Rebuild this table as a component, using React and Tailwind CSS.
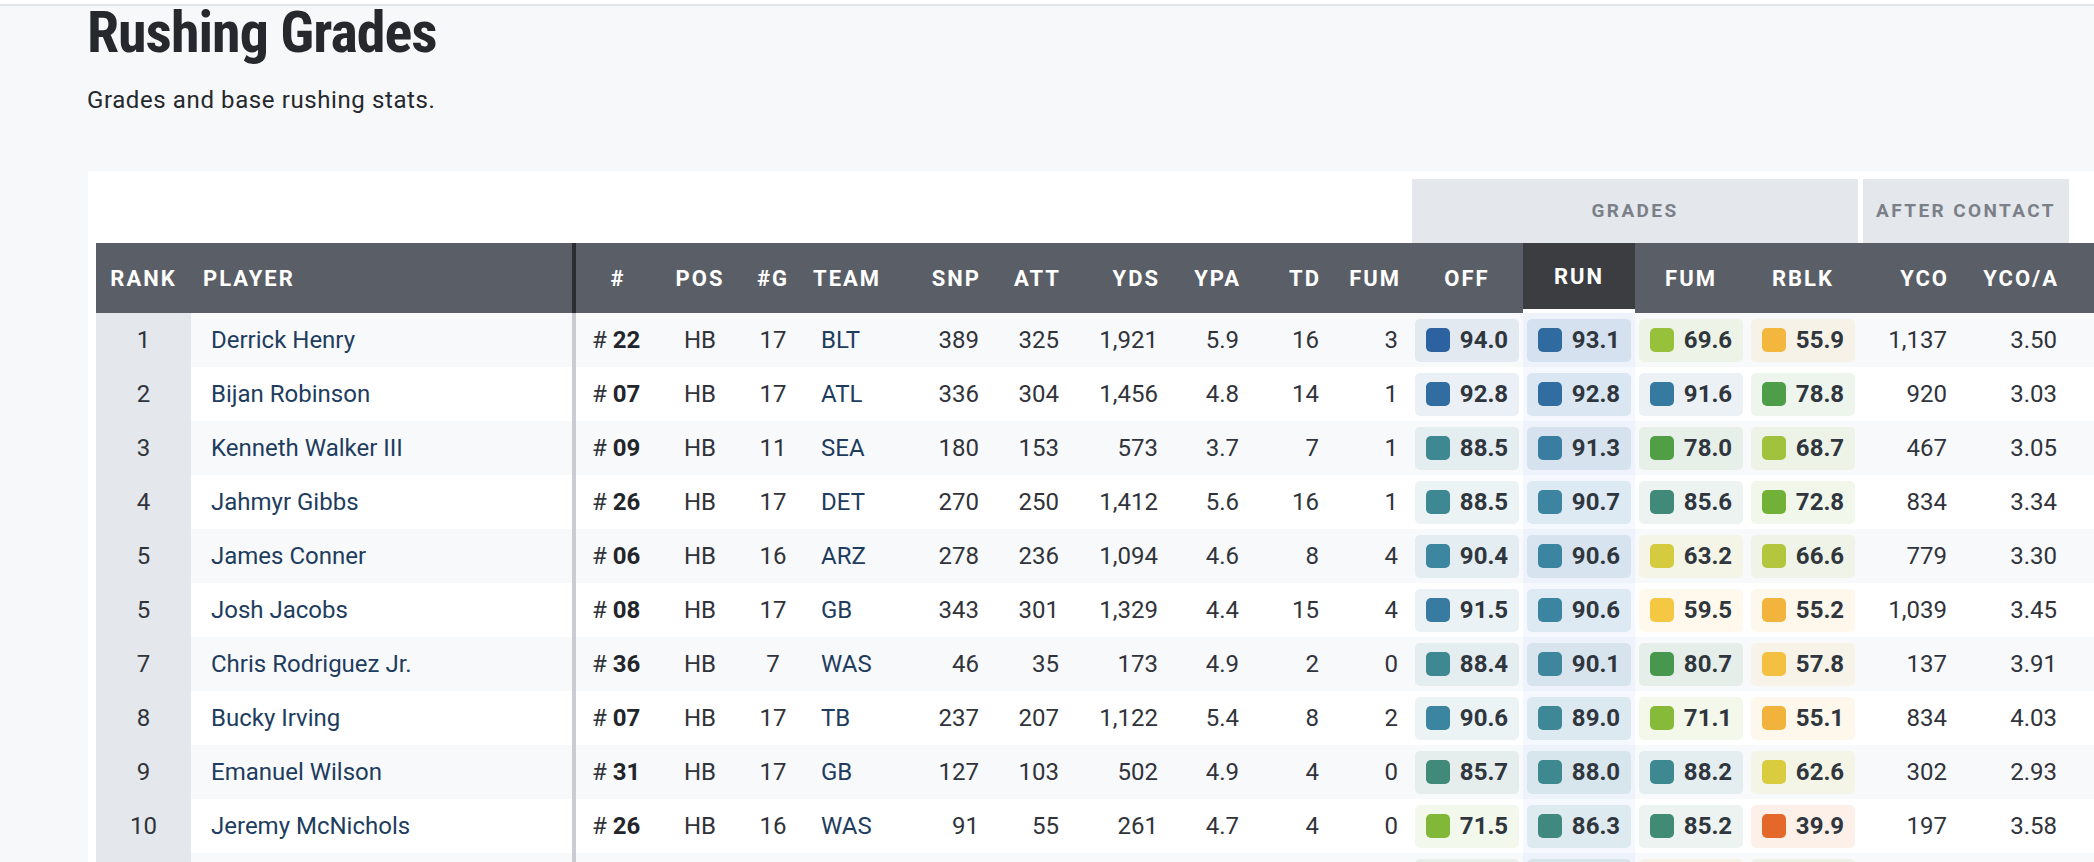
import React from "react";

const COLS =
  "grid grid-cols-[95px_381px_4px_84px_80px_66px_94px_91px_80px_99px_81px_80px_80px_112px_112px_112px_112px_100px_110px_1fr]";

const STOPS = [
  [0, "#d9432a"],
  [40, "#e4682a"],
  [55, "#f2b33c"],
  [60, "#f5ca45"],
  [63, "#d6cc3e"],
  [67, "#b0c43e"],
  [70, "#94c13a"],
  [72.5, "#74b236"],
  [78, "#509f45"],
  [81, "#47964f"],
  [85.5, "#418a78"],
  [88, "#3e8890"],
  [90.5, "#3d86a0"],
  [92, "#3575a0"],
  [94, "#2c62a0"],
  [100, "#2a5a9c"],
];

function hexToRgb(h) {
  const n = parseInt(h.slice(1), 16);
  return [(n >> 16) & 255, (n >> 8) & 255, n & 255];
}

function gradeRgb(g) {
  for (let i = 0; i < STOPS.length - 1; i++) {
    const [a, ca] = STOPS[i];
    const [b, cb] = STOPS[i + 1];
    if (g >= a && g <= b) {
      const t = (g - a) / (b - a);
      const x = hexToRgb(ca);
      const y = hexToRgb(cb);
      return x.map((v, k) => Math.round(v + (y[k] - v) * t));
    }
  }
  return hexToRgb(STOPS[STOPS.length - 1][1]);
}

const ROWS = [
  ["1", "Derrick Henry", "22", "HB", "17", "BLT", "389", "325", "1,921", "5.9", "16", "3", [94.0, 93.1, 69.6, 55.9], "1,137", "3.50"],
  ["2", "Bijan Robinson", "07", "HB", "17", "ATL", "336", "304", "1,456", "4.8", "14", "1", [92.8, 92.8, 91.6, 78.8], "920", "3.03"],
  ["3", "Kenneth Walker III", "09", "HB", "11", "SEA", "180", "153", "573", "3.7", "7", "1", [88.5, 91.3, 78.0, 68.7], "467", "3.05"],
  ["4", "Jahmyr Gibbs", "26", "HB", "17", "DET", "270", "250", "1,412", "5.6", "16", "1", [88.5, 90.7, 85.6, 72.8], "834", "3.34"],
  ["5", "James Conner", "06", "HB", "16", "ARZ", "278", "236", "1,094", "4.6", "8", "4", [90.4, 90.6, 63.2, 66.6], "779", "3.30"],
  ["5", "Josh Jacobs", "08", "HB", "17", "GB", "343", "301", "1,329", "4.4", "15", "4", [91.5, 90.6, 59.5, 55.2], "1,039", "3.45"],
  ["7", "Chris Rodriguez Jr.", "36", "HB", "7", "WAS", "46", "35", "173", "4.9", "2", "0", [88.4, 90.1, 80.7, 57.8], "137", "3.91"],
  ["8", "Bucky Irving", "07", "HB", "17", "TB", "237", "207", "1,122", "5.4", "8", "2", [90.6, 89.0, 71.1, 55.1], "834", "4.03"],
  ["9", "Emanuel Wilson", "31", "HB", "17", "GB", "127", "103", "502", "4.9", "4", "0", [85.7, 88.0, 88.2, 62.6], "302", "2.93"],
  ["10", "Jeremy McNichols", "26", "HB", "16", "WAS", "91", "55", "261", "4.7", "4", "0", [71.5, 86.3, 85.2, 39.9], "197", "3.58"],
];

const PARTIAL = [76.0, 86.1, 57.0, 70.5];

function GradeBox({ value, run, empty }) {
  const [r, g, b] = gradeRgb(value);
  return (
    <div className={`flex h-full items-center justify-center ${run ? "bg-[#3b82f6]/[0.05]" : ""}`}>
      <div
        className="mx-1 flex h-[43px] w-full items-center gap-[10px] rounded-[5px] px-[11px]"
        style={{ backgroundColor: `rgba(${r},${g},${b},${run ? 0.13 : 0.1})` }}
      >
        <span
          className="h-[24px] w-[24px] shrink-0 rounded-[5px]"
          style={{ backgroundColor: `rgb(${r},${g},${b})` }}
        />
        {!empty && <span className="text-[24px] font-bold text-[#30363d]">{value.toFixed(1)}</span>}
      </div>
    </div>
  );
}

function HeaderCell({ children, align = "center", extra = "" }) {
  const a =
    align === "center" ? "justify-center" : align === "right" ? "justify-end pr-[10px]" : "justify-start";
  return (
    <div className={`flex h-full items-center ${a} ${extra}`}>
      <span className="text-[22px] font-bold uppercase tracking-[2px] text-white">{children}</span>
    </div>
  );
}

export default function App() {
  return (
    <div className="h-[862px] w-full overflow-hidden bg-[#f7f8fa] font-['Roboto',sans-serif] text-[#30343a]">
      <div className="h-[4px] bg-white" />
      <div className="h-[2px] bg-[#e2e4e7]" />
      <div className="flex h-[165px] flex-col items-start pl-[87px]">
        <h1 className="mt-[-3px] h-[58px] whitespace-nowrap font-['Roboto_Condensed','Roboto',sans-serif] text-[58px] font-bold leading-none tracking-[-1px] font-stretch-condensed text-[#25282c]">
          Rushing Grades
        </h1>
        <p className="mt-[27px] text-[24px] leading-none tracking-[0.6px] text-[#25282c]">
          Grades and base rushing stats.
        </p>
      </div>

      <div className="ml-[88px] bg-white pl-2 pt-2">
        {/* group header */}
        <div className={`${COLS} h-[64px]`}>
          <div className="col-span-4 col-start-14 mx-px flex items-center justify-center bg-[#e4e7eb]">
            <span className="text-[19px] font-bold uppercase tracking-[2.4px] text-[#7b8088]">Grades</span>
          </div>
          <div className="col-span-2 ml-1 flex items-center justify-center bg-[#e4e7eb]">
            <span className="text-[19px] font-bold uppercase tracking-[2.4px] text-[#7b8088]">After Contact</span>
          </div>
        </div>

        {/* column header */}
        <div className={`${COLS} h-[70px] bg-[#5a5e66]`}>
          <HeaderCell>Rank</HeaderCell>
          <HeaderCell align="left" extra="pl-[12px]">Player</HeaderCell>
          <div className="bg-[#2b2d31]" />
          <HeaderCell>#</HeaderCell>
          <HeaderCell>Pos</HeaderCell>
          <HeaderCell>#G</HeaderCell>
          <HeaderCell align="left" extra="pl-[7px]">Team</HeaderCell>
          <HeaderCell align="right">Snp</HeaderCell>
          <HeaderCell align="right">Att</HeaderCell>
          <HeaderCell align="right">Yds</HeaderCell>
          <HeaderCell align="right">Ypa</HeaderCell>
          <HeaderCell align="right">Td</HeaderCell>
          <HeaderCell align="right">Fum</HeaderCell>
          <HeaderCell>Off</HeaderCell>
          <HeaderCell extra="bg-[#3c3d41] border-b-4 border-white">Run</HeaderCell>
          <HeaderCell>Fum</HeaderCell>
          <HeaderCell>Rblk</HeaderCell>
          <HeaderCell align="right">Yco</HeaderCell>
          <HeaderCell align="right">Yco/A</HeaderCell>
          <div />
        </div>

        {/* body */}
        {ROWS.map((r, i) => (
          <div key={i} className={`${COLS} h-[54px] text-[24px] ${i % 2 === 0 ? "bg-[#f8f9fb]" : "bg-white"}`}>
            <div className="flex items-center justify-center bg-[#e4e7eb]">{r[0]}</div>
            <div className="flex items-center pl-[20px] text-[#1e3d5e]">{r[1]}</div>
            <div className="bg-[#c9ccd2]" />
            <div className="flex items-center pl-[16px]">
              <span>#&nbsp;</span>
              <span className="font-bold text-[#222529]">{r[2]}</span>
            </div>
            <div className="flex items-center justify-center">{r[3]}</div>
            <div className="flex items-center justify-center">{r[4]}</div>
            <div className="flex items-center pl-[15px] text-[#1e3d5e]">{r[5]}</div>
            <div className="flex items-center justify-end pr-3">{r[6]}</div>
            <div className="flex items-center justify-end pr-3">{r[7]}</div>
            <div className="flex items-center justify-end pr-3">{r[8]}</div>
            <div className="flex items-center justify-end pr-3">{r[9]}</div>
            <div className="flex items-center justify-end pr-3">{r[10]}</div>
            <div className="flex items-center justify-end pr-[13px]">{r[11]}</div>
            <GradeBox value={r[12][0]} />
            <GradeBox value={r[12][1]} run />
            <GradeBox value={r[12][2]} />
            <GradeBox value={r[12][3]} />
            <div className="flex items-center justify-end pr-3">{r[13]}</div>
            <div className="flex items-center justify-end pr-3">{r[14]}</div>
            <div />
          </div>
        ))}

        {/* next row, mostly below the fold */}
        <div className={`${COLS} h-[54px] bg-[#f8f9fb]`}>
          <div className="bg-[#e4e7eb]" />
          <div />
          <div className="bg-[#c9ccd2]" />
          <div />
          <div />
          <div />
          <div />
          <div />
          <div />
          <div />
          <div />
          <div />
          <div />
          <GradeBox value={PARTIAL[0]} empty />
          <GradeBox value={PARTIAL[1]} run empty />
          <GradeBox value={PARTIAL[2]} empty />
          <GradeBox value={PARTIAL[3]} empty />
          <div />
          <div />
          <div />
        </div>
      </div>
    </div>
  );
}
